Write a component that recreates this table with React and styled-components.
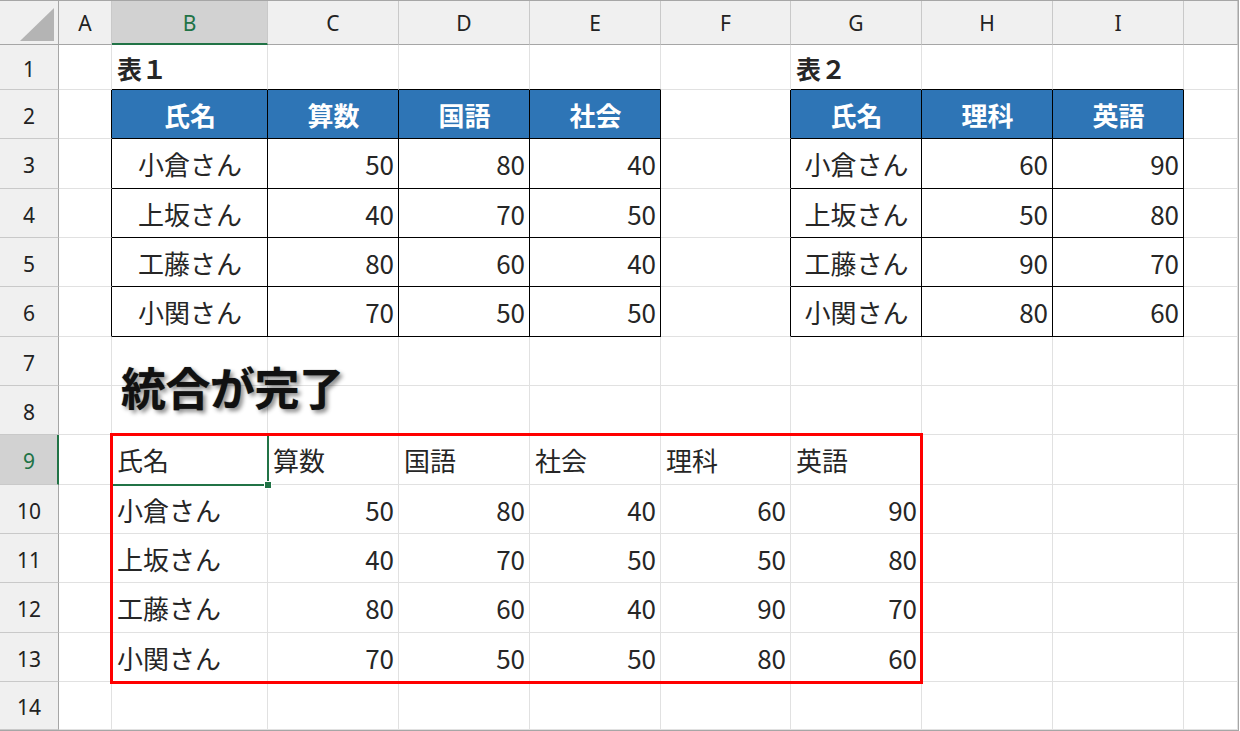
import React from "react";
import styled, { createGlobalStyle } from "styled-components";

const Global = createGlobalStyle`
  html, body { margin: 0; padding: 0; background: #fff; }
  body { font-family: "Noto Sans CJK JP", "Noto Sans", sans-serif; }
`;

const COL_WIDTHS = [59, 53, 156, 131, 131, 131, 130, 131, 131, 131, 54];
const LETTERS = ["A", "B", "C", "D", "E", "F", "G", "H", "I", ""];
const GRID = "#e1e1e1";
const HEAD_LINE = "#c9c9c9";
const HEAD_EDGE = "#a6a6a6";
const GREEN = "#217346";
const BLUE = "#2e75b6";

const Frame = styled.div`
  position: relative;
  width: 1239px;
  height: 731px;
  box-sizing: border-box;
  border-top: 1px solid ${HEAD_EDGE};
  border-right: 1px solid ${HEAD_EDGE};
  border-bottom: 1px solid ${HEAD_EDGE};
  overflow: hidden;
  background: #fff;
`;

const Sheet = styled.div`
  display: grid;
  grid-template-columns: ${COL_WIDTHS.map((w) => w + "px").join(" ")};
  grid-template-rows: 44px 45px repeat(12, 49.333px) 48px;
`;

const Corner = styled.div`
  position: relative;
  background: #f0f0f0;
  box-sizing: border-box;
  border-right: 1px solid ${HEAD_EDGE};
  border-bottom: 1px solid ${HEAD_EDGE};
  &::after {
    content: "";
    position: absolute;
    left: 20px;
    top: 7px;
    width: 34px;
    height: 33px;
    background: #b4b4b4;
    clip-path: polygon(100% 0, 100% 100%, 0 100%);
  }
`;

const ColHead = styled.div`
  display: flex;
  align-items: center;
  justify-content: center;
  box-sizing: border-box;
  background: ${(p) => (p.$active ? "#d2d2d2" : "#f0f0f0")};
  color: ${(p) => (p.$active ? GREEN : "#222")};
  border-right: 1px solid ${HEAD_LINE};
  border-bottom: ${(p) => (p.$active ? `2px solid ${GREEN}` : `1px solid ${HEAD_EDGE}`)};
  font-family: "Noto Sans", "Open Sans", sans-serif;
  font-size: 21px;
  padding-top: ${(p) => (p.$active ? "1px" : "0")};
`;

const RowHead = styled.div`
  display: flex;
  align-items: center;
  justify-content: center;
  box-sizing: border-box;
  background: ${(p) => (p.$active ? "#d2d2d2" : "#f0f0f0")};
  color: ${(p) => (p.$active ? GREEN : "#222")};
  border-bottom: 1px solid ${HEAD_LINE};
  border-right: ${(p) => (p.$active ? `2px solid ${GREEN}` : `1px solid ${HEAD_EDGE}`)};
  font-family: "Noto Sans", "Open Sans", sans-serif;
  font-size: 21px;
  padding-top: 4px;
  padding-left: ${(p) => (p.$active ? "1px" : "0")};
`;

const Cell = styled.div`
  position: relative;
  display: flex;
  align-items: center;
  justify-content: ${(p) =>
    p.$align === "right" ? "flex-end" : p.$align === "center" ? "center" : "flex-start"};
  box-sizing: border-box;
  padding: 1px 4px 0 5px;
  background: ${(p) => p.$fill || "transparent"};
  color: ${(p) => p.$color || "#262626"};
  font-weight: ${(p) => (p.$bold ? 700 : 400)};
  font-size: ${(p) => (p.$title ? "25px" : "26px")};
  font-family: "Noto Sans CJK JP", "Noto Sans", sans-serif;
  border-right: 1px solid ${(p) => p.$br};
  border-bottom: 1px solid ${(p) => p.$bb};
  white-space: nowrap;
  z-index: ${(p) => (p.$active ? 2 : "auto")};
`;

const ActiveBox = styled.div`
  position: absolute;
  left: -1px;
  top: -1px;
  right: -2px;
  bottom: -2px;
  border: 2px solid ${GREEN};
  pointer-events: none;
  &::after {
    content: "";
    position: absolute;
    right: -5px;
    bottom: -5px;
    width: 6px;
    height: 6px;
    background: ${GREEN};
    border: 1px solid #fff;
  }
`;

const Highlight = styled.div`
  position: absolute;
  left: 110px;
  top: 432px;
  width: 813px;
  height: 251px;
  box-sizing: border-box;
  border: 3px solid #ff0000;
  pointer-events: none;
  z-index: 3;
`;

const Callout = styled.div`
  position: absolute;
  left: 121px;
  top: 363px;
  font-family: "Noto Sans CJK JP", sans-serif;
  font-weight: 700;
  font-size: 45px;
  line-height: 1;
  color: #111;
  letter-spacing: -0.5px;
  text-shadow: 3px 3px 4px rgba(0, 0, 0, 0.45), 0 0 1px rgba(0, 0, 0, 0.6);
  white-space: nowrap;
  z-index: 3;
`;

const T1 = { r0: 2, r1: 6, c0: 2, c1: 5 };
const T2 = { r0: 2, r1: 6, c0: 7, c1: 9 };
const inT = (t, r, c) => r >= t.r0 && r <= t.r1 && c >= t.c0 && c <= t.c1;
const inTable = (r, c) => inT(T1, r, c) || inT(T2, r, c);

const t1 = [
  ["小倉さん", 50, 80, 40],
  ["上坂さん", 40, 70, 50],
  ["工藤さん", 80, 60, 40],
  ["小関さん", 70, 50, 50],
];
const t2 = [
  ["小倉さん", 60, 90],
  ["上坂さん", 50, 80],
  ["工藤さん", 90, 70],
  ["小関さん", 80, 60],
];
const merged = [
  ["小倉さん", 50, 80, 40, 60, 90],
  ["上坂さん", 40, 70, 50, 50, 80],
  ["工藤さん", 80, 60, 40, 90, 70],
  ["小関さん", 70, 50, 50, 80, 60],
];

function content(r, c) {
  if (r === 1 && c === 2) return { text: "表１", bold: true, title: true };
  if (r === 1 && c === 7) return { text: "表２", bold: true, title: true };
  if (r === 2 && c >= 2 && c <= 5)
    return { text: ["氏名", "算数", "国語", "社会"][c - 2], bold: true, align: "center", fill: BLUE, color: "#fff" };
  if (r === 2 && c >= 7 && c <= 9)
    return { text: ["氏名", "理科", "英語"][c - 7], bold: true, align: "center", fill: BLUE, color: "#fff" };
  if (r >= 3 && r <= 6 && c >= 2 && c <= 5) {
    const v = t1[r - 3][c - 2];
    return { text: v, align: c === 2 ? "center" : "right" };
  }
  if (r >= 3 && r <= 6 && c >= 7 && c <= 9) {
    const v = t2[r - 3][c - 7];
    return { text: v, align: c === 7 ? "center" : "right" };
  }
  if (r === 9 && c >= 2 && c <= 7)
    return { text: ["氏名", "算数", "国語", "社会", "理科", "英語"][c - 2], align: "left", active: c === 2 };
  if (r >= 10 && r <= 13 && c >= 2 && c <= 7) {
    const v = merged[r - 10][c - 2];
    return { text: v, align: c === 2 ? "left" : "right" };
  }
  return null;
}

export default function App() {
  const rows = [];
  for (let r = 1; r <= 14; r++) rows.push(r);
  const cols = [];
  for (let c = 1; c <= 10; c++) cols.push(c);

  return (
    <>
      <Global />
      <Frame>
        <Sheet>
          <Corner />
          {LETTERS.map((l, i) => (
            <ColHead key={"h" + i} $active={l === "B"}>
              {l}
            </ColHead>
          ))}
          {rows.map((r) => (
            <React.Fragment key={r}>
              <RowHead $active={r === 9}>{r}</RowHead>
              {cols.map((c) => {
                const d = content(r, c);
                const br = inTable(r, c) || inTable(r, c + 1) ? "#000" : GRID;
                const bb = inTable(r, c) || inTable(r + 1, c) ? "#000" : GRID;
                return (
                  <Cell
                    key={c}
                    $br={br}
                    $bb={bb}
                    $align={d?.align}
                    $bold={d?.bold}
                    $title={d?.title}
                    $fill={d?.fill}
                    $color={d?.color}
                    $active={d?.active}
                  >
                    {d?.text}
                    {d?.active && <ActiveBox />}
                  </Cell>
                );
              })}
            </React.Fragment>
          ))}
        </Sheet>
        <Callout>統合が完了</Callout>
        <Highlight />
      </Frame>
    </>
  );
}
